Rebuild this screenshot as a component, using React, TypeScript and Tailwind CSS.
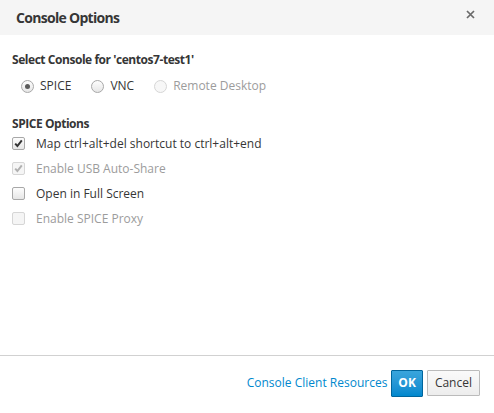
import React from 'react';

const font = { fontFamily: '"Open Sans", "Liberation Sans", sans-serif' };

const Radio = ({ label, checked = false, disabled = false }: { label: string; checked?: boolean; disabled?: boolean }) => (
  <label className={`flex items-center gap-[6px] ${disabled ? 'text-[#9c9c9c]' : 'text-[#363636]'}`}>
    <span
      className={`flex h-[13px] w-[13px] items-center justify-center rounded-full border ${
        disabled ? 'border-[#d6d6d6] bg-[#f7f7f7]' : 'border-[#a8a8a8] bg-gradient-to-b from-[#fdfdfd] to-[#e6e6e6]'
      }`}
    >
      {checked && <span className="h-[5px] w-[5px] rounded-full bg-[#5a5a5a]" />}
    </span>
    <span>{label}</span>
  </label>
);

const Checkbox = ({ label, checked = false, disabled = false }: { label: string; checked?: boolean; disabled?: boolean }) => (
  <label className={`flex h-[25px] items-center gap-[11px] ${disabled ? 'text-[#9c9c9c]' : 'text-[#363636]'}`}>
    <span
      className={`flex h-[13px] w-[13px] items-center justify-center rounded-[2px] border ${
        disabled ? 'border-[#d6d6d6] bg-[#f5f5f5]' : 'border-[#a8a8a8] bg-gradient-to-b from-[#fdfdfd] to-[#e6e6e6]'
      }`}
    >
      {checked && (
        <svg width="9" height="9" viewBox="0 0 9 9">
          <path
            d="M1.2 4.6 L3.4 7 L7.8 1.4"
            fill="none"
            stroke={disabled ? '#b0b0b0' : '#333'}
            strokeWidth="2"
          />
        </svg>
      )}
    </span>
    <span>{label}</span>
  </label>
);

export default function App() {
  return (
    <div className="flex h-[413px] w-[494px] flex-col bg-white text-[12px]" style={font}>
      {/* header */}
      <div className="flex h-[35px] items-center justify-between bg-[#f5f5f5] pl-4 pr-[19px]">
        <h4 className="text-[14px] font-bold tracking-[-0.7px] text-[#363636]">Console Options</h4>
        <svg width="9" height="9" viewBox="0 0 9 9" className="-mt-[6px]">
          <path d="M1 1 L8 8 M8 1 L1 8" stroke="#6a6a6a" strokeWidth="1.7" />
        </svg>
      </div>

      {/* body */}
      <div className="flex-1 px-3 pt-[16px]">
        <div className="font-bold tracking-[-0.45px] text-[#363636]">Select Console for 'centos7-test1'</div>
        <div className="mt-[8px] flex items-center gap-[20px] pl-[9px]">
          <Radio label="SPICE" checked />
          <Radio label="VNC" />
          <Radio label="Remote Desktop" disabled />
        </div>

        <div className="mt-[20px] font-bold tracking-[-0.45px] text-[#363636]">SPICE Options</div>
        <div className="-mt-[2px] flex flex-col">
          <Checkbox label="Map ctrl+alt+del shortcut to ctrl+alt+end" checked />
          <Checkbox label="Enable USB Auto-Share" checked disabled />
          <Checkbox label="Open in Full Screen" />
          <Checkbox label="Enable SPICE Proxy" disabled />
        </div>
      </div>

      {/* footer */}
      <div className="flex h-[58px] items-center justify-end border-t border-[#d1d1d1] pr-[14px] pb-[3px]">
        <a className="text-[12px] text-[#0088ce]">Console Client Resources</a>
        <button className="ml-[4px] h-[27px] rounded-[1px] border border-[#00659c] bg-gradient-to-b from-[#39a5dc] to-[#0088ce] px-[6px] text-[12px] font-bold text-white">
          OK
        </button>
        <button className="ml-[4px] h-[26px] rounded-[1px] border border-[#bbbbbb] bg-gradient-to-b from-[#fafafa] to-[#ededed] px-[7px] text-[12px] text-[#363636]">
          Cancel
        </button>
      </div>
    </div>
  );
}
